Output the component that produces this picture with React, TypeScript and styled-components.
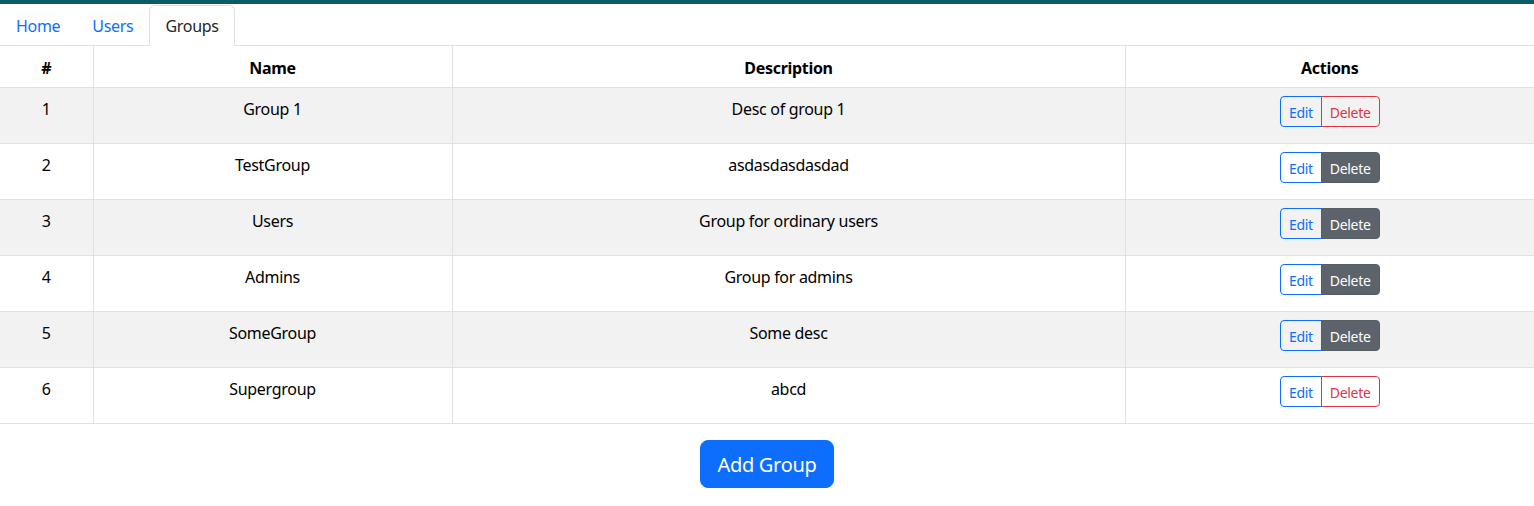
import styled, { createGlobalStyle } from "styled-components";

const GlobalStyle = createGlobalStyle`
    body {
        margin: 0;
        font-family: "Noto Sans", "Liberation Sans", sans-serif;
        font-size: 16px;
        line-height: 1.5;
        letter-spacing: -0.3px;
        color: #212529;
        background: #fff;
    }
    * {
        box-sizing: border-box;
    }
`;

interface Group {
    id: number;
    name: string;
    description: string;
    deleteStyle: "outline" | "solid";
}

const groups: Group[] = [
    { id: 1, name: "Group 1", description: "Desc of group 1", deleteStyle: "outline" },
    { id: 2, name: "TestGroup", description: "asdasdasdasdad", deleteStyle: "solid" },
    { id: 3, name: "Users", description: "Group for ordinary users", deleteStyle: "solid" },
    { id: 4, name: "Admins", description: "Group for admins", deleteStyle: "solid" },
    { id: 5, name: "SomeGroup", description: "Some desc", deleteStyle: "solid" },
    { id: 6, name: "Supergroup", description: "abcd", deleteStyle: "outline" },
];

export default function App() {
    return (
        <>
            <GlobalStyle />
            <TopBar />
            <Tabs>
                <TabLink>Home</TabLink>
                <TabLink>Users</TabLink>
                <TabLink $active>Groups</TabLink>
            </Tabs>
            <Table>
                <colgroup>
                    <col style={{ width: 93 }} />
                    <col style={{ width: 359 }} />
                    <col style={{ width: 673 }} />
                    <col />
                </colgroup>
                <thead>
                    <tr>
                        <HeadCell>#</HeadCell>
                        <HeadCell>Name</HeadCell>
                        <HeadCell>Description</HeadCell>
                        <HeadCell>Actions</HeadCell>
                    </tr>
                </thead>
                <tbody>
                    {groups.map((g, i) => (
                        <Row key={g.id} $striped={i % 2 === 0}>
                            <Cell>{g.id}</Cell>
                            <Cell>{g.name}</Cell>
                            <Cell>{g.description}</Cell>
                            <ActionCell>
                                <BtnGroup>
                                    <EditButton>Edit</EditButton>
                                    <DeleteButton $solid={g.deleteStyle === "solid"}>
                                        Delete
                                    </DeleteButton>
                                </BtnGroup>
                            </ActionCell>
                        </Row>
                    ))}
                </tbody>
            </Table>
            <Footer>
                <AddButton>Add Group</AddButton>
            </Footer>
        </>
    );
}

const TopBar = styled.div`
    height: 4px;
    background: #0b5d63;
`;

const Tabs = styled.nav`
    display: flex;
    align-items: flex-end;
    border-bottom: 1px solid #dee2e6;
    height: 42px;
`;

const TabLink = styled.a<{ $active?: boolean }>`
    display: block;
    padding: 8px 15px 7px;
    margin-bottom: -1px;
    color: ${(p) => (p.$active ? "#212529" : "#0d6efd")};
    background: ${(p) => (p.$active ? "#fff" : "transparent")};
    border: 1px solid transparent;
    border-color: ${(p) => (p.$active ? "#dee2e6 #dee2e6 #fff" : "transparent")};
    border-top-left-radius: 6px;
    border-top-right-radius: 6px;
    cursor: pointer;
`;

const Table = styled.table`
    width: 100%;
    border-collapse: collapse;
    table-layout: fixed;
    text-align: center;
`;

const HeadCell = styled.th`
    padding: 10px 8px 6px;
    height: 41px;
    font-weight: 700;
    color: #000;
    border-bottom: 1px solid #dee2e6;
    border-left: 1px solid #dee2e6;
    &:first-child {
        border-left: none;
    }
`;

const Row = styled.tr<{ $striped: boolean }>`
    background: ${(p) => (p.$striped ? "#f2f2f2" : "#fff")};
`;

const Cell = styled.td`
    padding: 9px 8px 7px;
    height: 56px;
    vertical-align: top;
    color: #000;
    border-bottom: 1px solid #dee2e6;
    border-left: 1px solid #dee2e6;
    &:first-child {
        border-left: none;
    }
`;

const ActionCell = styled(Cell)`
    padding-top: 8px;
`;

const BtnGroup = styled.div`
    display: inline-flex;
    vertical-align: middle;
`;

const SmallButton = styled.button`
    font-family: inherit;
    font-size: 14px;
    line-height: 1.5;
    letter-spacing: -0.3px;
    height: 31px;
    padding: 5px 8px 3px;
    background: transparent;
    cursor: pointer;
`;

const EditButton = styled(SmallButton)`
    color: #0d6efd;
    border: 1px solid #0d6efd;
    border-radius: 4px 0 0 4px;
`;

const DeleteButton = styled(SmallButton)<{ $solid: boolean }>`
    margin-left: -1px;
    border-radius: 0 4px 4px 0;
    color: ${(p) => (p.$solid ? "#fff" : "#dc3545")};
    background: ${(p) => (p.$solid ? "#5c636a" : "transparent")};
    border: 1px solid ${(p) => (p.$solid ? "#565e64" : "#dc3545")};
`;

const Footer = styled.div`
    display: flex;
    justify-content: center;
    padding-top: 16px;
`;

const AddButton = styled.button`
    font-family: inherit;
    font-size: 20px;
    line-height: 1.5;
    letter-spacing: -0.3px;
    padding: 9px 16px 7px;
    color: #fff;
    background: #0d6efd;
    border: 1px solid #0d6efd;
    border-radius: 8px;
    cursor: pointer;
`;
